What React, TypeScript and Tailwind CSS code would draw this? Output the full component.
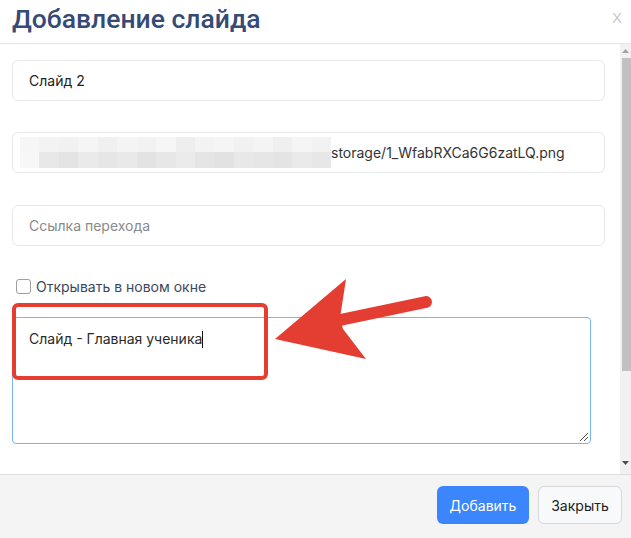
import React from 'react';

const blurTop = [
  'bg-[#f6f6f6]', 'bg-[#f3f3f3]', 'bg-[#f1f1f1]', 'bg-[#f5f5f5]', 'bg-[#f0f0f0]', 'bg-[#f4f4f4]',
  'bg-[#f2f2f2]', 'bg-[#f6f6f6]', 'bg-[#eeeeee]', 'bg-[#f3f3f3]', 'bg-[#f5f5f5]', 'bg-[#f1f1f1]',
  'bg-[#f4f4f4]', 'bg-[#efefef]', 'bg-[#f5f5f5]', 'bg-[#f2f2f2]',
];
const blurBottom = [
  'bg-[#f7f7f7]', 'bg-[#e8e8e8]', 'bg-[#e4e4e4]', 'bg-[#eaeaea]', 'bg-[#e6e6e6]', 'bg-[#e9e9e9]',
  'bg-[#e3e3e3]', 'bg-[#e7e7e7]', 'bg-[#ebebeb]', 'bg-[#e5e5e5]', 'bg-[#e2e2e2]', 'bg-[#e8e8e8]',
  'bg-[#e6e6e6]', 'bg-[#e4e4e4]', 'bg-[#eaeaea]', 'bg-[#e7e7e7]',
];

function Field({ children }: { children: React.ReactNode }) {
  return (
    <div className="h-[41px] rounded-[6px] border border-[#e7e8ec] bg-white flex items-center pl-[16px] text-[14px] text-[#222]">
      {children}
    </div>
  );
}

export default function App() {
  return (
    <div
      className="relative w-[631px] h-[538px] bg-white overflow-hidden flex flex-col"
      style={{ fontFamily: 'Inter, "Liberation Sans", sans-serif' }}
    >
      {/* header */}
      <div className="h-[44px] shrink-0 border-b border-[#e6e6e6] flex items-center justify-between pl-[12px] pr-[9px]">
        <h1
          className="text-[26.5px] font-medium text-[#354a75] leading-none -mt-[5px]"
          style={{ fontFamily: 'Roboto, "Liberation Sans", sans-serif' }}
        >
          Добавление слайда
        </h1>
        <span className="text-[15px] text-[#c9c9c9] -mt-[7px]" style={{ fontFamily: '"Liberation Sans", sans-serif' }}>
          X
        </span>
      </div>

      {/* body */}
      <div className="flex-1 flex min-h-0">
        <div className="flex-1 pl-[12px] pr-[15px] pt-[16px] flex flex-col">
          <Field>Слайд 2</Field>

          <div className="mt-[31px] h-[41px] rounded-[6px] border border-[#e7e8ec] bg-white flex items-center pl-[7px] text-[14px] text-[#333]">
            <div className="w-[311px] h-[31px] flex flex-col">
              <div className="flex h-[15px]">
                {blurTop.map((c, i) => (
                  <div key={i} className={`flex-1 ${c}`} />
                ))}
              </div>
              <div className="flex h-[16px]">
                {blurBottom.map((c, i) => (
                  <div key={i} className={`flex-1 ${c}`} />
                ))}
              </div>
            </div>
            <span>storage/1_WfabRXCa6G6zatLQ.png</span>
          </div>

          <div className="mt-[32px]">
            <Field>
              <span className="text-[#8a8a8a]">Ссылка перехода</span>
            </Field>
          </div>

          <label className="mt-[30px] flex items-center gap-[5px] text-[14px] text-[#3d4860]">
            <span className="w-[15px] h-[15px] ml-[4px] rounded-[3px] border border-[#a0a0a0] bg-white" />
            Открывать в новом окне
          </label>

          <div className="relative mt-[20px] w-[579px] h-[127px] rounded-[4px] border border-[#7ab6ea] bg-white pl-[16px] pt-[10px] text-[14px] text-[#2a2a2a]">
            <span>Слайд - Главная ученика</span>
            <span className="inline-block w-px h-[17px] bg-[#111] align-middle -mt-[2px]" />
            <svg className="absolute right-[1px] bottom-[1px]" width="10" height="10" viewBox="0 0 10 10">
              <line x1="1" y1="9" x2="9" y2="1" stroke="#555" strokeWidth="1" />
              <line x1="5" y1="9" x2="9" y2="5" stroke="#555" strokeWidth="1" />
            </svg>
          </div>
        </div>

        {/* scrollbar */}
        <div className="w-[11px] bg-[#f1f1f1] flex flex-col items-end">
          <div className="h-[14px] w-full flex items-center justify-center">
            <svg width="7" height="4" viewBox="0 0 7 4">
              <polygon points="0,4 7,4 3.5,0" fill="#a3a3a3" />
            </svg>
          </div>
          <div className="w-[9px] h-[313px] bg-[#c1c1c1]" />
          <div className="flex-1" />
          <div className="h-[14px] w-full flex items-center justify-center mb-[4px]">
            <svg width="7" height="4" viewBox="0 0 7 4">
              <polygon points="0,0 7,0 3.5,4" fill="#505050" />
            </svg>
          </div>
        </div>
      </div>

      {/* footer */}
      <div className="h-[64px] shrink-0 border-t border-[#dedede] bg-[#f4f4f4] flex items-center justify-end gap-[9px] pr-[9px] pb-[3px]">
        <button className="h-[38px] w-[92px] rounded-[6px] bg-[#3b86fc] text-white text-[14px]">Добавить</button>
        <button className="h-[38px] w-[84px] rounded-[6px] bg-[#f8f9fa] border border-[#d6d8dc] text-[#222] text-[14px]">
          Закрыть
        </button>
      </div>

      {/* annotation: red frame */}
      <div className="absolute left-[12px] top-[303px] w-[256px] h-[77px] rounded-[6px] border-[4px] border-[#e43d32]" />

      {/* annotation: red arrow */}
      <svg className="absolute left-0 top-0 pointer-events-none" width="631" height="538" viewBox="0 0 631 538">
        <line x1="340" y1="320" x2="426" y2="302" stroke="#e43d32" strokeWidth="12" strokeLinecap="round" />
        <polygon points="275,339 346,279 340,318 343,329 366,359" fill="#e43d32" />
      </svg>
    </div>
  );
}
